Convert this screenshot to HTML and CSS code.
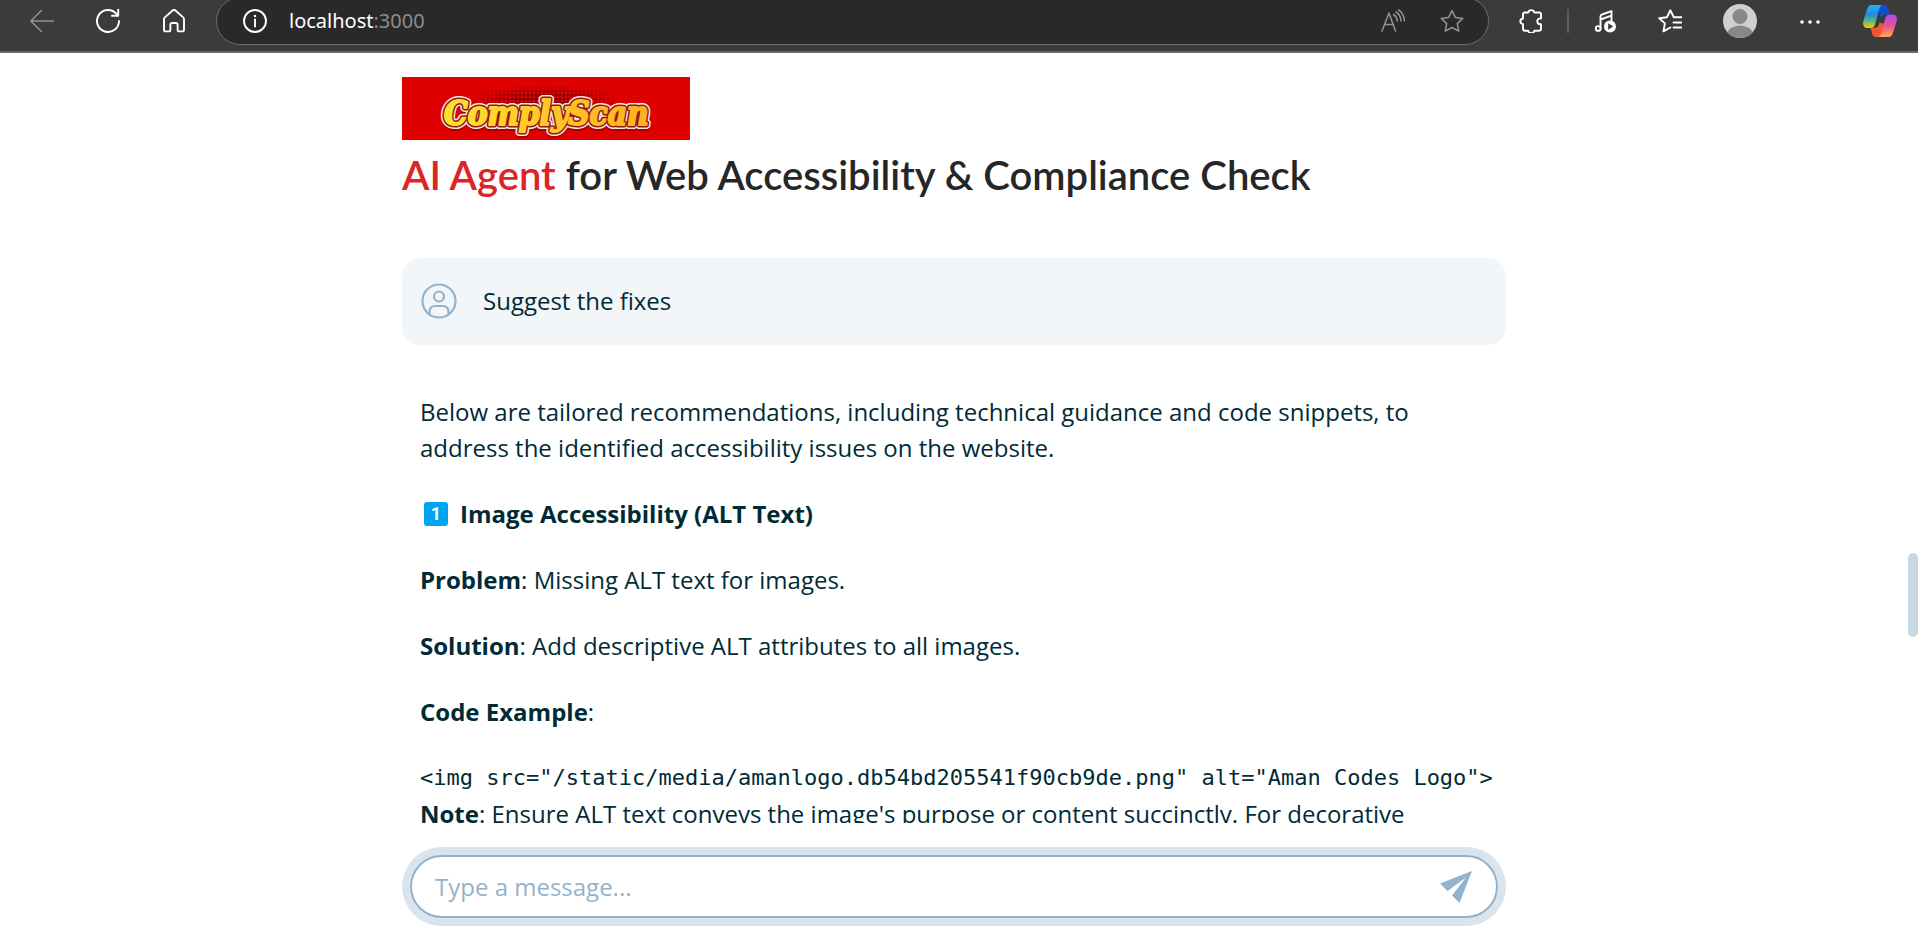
FILE: index.html
```html
<!DOCTYPE html>
<html lang="en">
<head>
<meta charset="utf-8">
<title>ComplyScan</title>
<link rel="stylesheet" href="styles.css">
</head>
<body>
<header class="toolbar">
  <nav class="nav-buttons" aria-label="Browser navigation">
    <button class="tool dim" aria-label="Back"><svg viewBox="0 0 24 24"><path d="M24 12H.8M11.500 1.500L.8 12l10.700 10.500"/></svg></button>
    <button class="tool" aria-label="Refresh"><svg viewBox="0 0 24 24"><path class="bold" d="M23 12A11 11 0 1 1 20.500 5M22.200.5v6.300h-6.300"/></svg></button>
    <button class="tool" aria-label="Home"><svg viewBox="0 0 24 24"><path class="bold" d="M2 10.200c0-.8.300-1.300.8-1.800l7.800-6.900c.9-.8 1.900-.8 2.800 0l7.800 6.900c.5.500.8 1 .8 1.800v10.600c0 1-.6 1.600-1.600 1.600h-3.200c-1 0-1.600-.6-1.600-1.600v-5.200c0-1-.6-1.600-1.600-1.600h-4c-1 0-1.600.6-1.600 1.600v5.200c0 1-.6 1.600-1.600 1.600H3.600c-1 0-1.600-.6-1.600-1.600z"/></svg></button>
  </nav>
  <div class="address">
    <button class="tool" aria-label="Site information"><svg viewBox="0 0 24 24"><circle class="bold" cx="12" cy="12" r="11"/><path class="bold" d="M12 10.500v7"/><circle class="solid" cx="12" cy="7" r="1.200"/></svg></button>
    <div class="url">localhost<span class="port">:3000</span></div>
    <button class="tool dim" aria-label="Read aloud"><svg viewBox="0 0 24 24"><path d="M1 22L8 4l6.500 18M3.700 15.500h8.700M12.500 5.500c2.300 1.500 3.500 3.500 3.700 6.500M15 3c3.200 2 4.800 5 5 9M17.500.8c3.700 2.500 5.700 6.200 6 11.200"/></svg></button>
    <button class="tool dim" aria-label="Add to favorites"><svg viewBox="0 0 24 24"><path d="M12 1.500l3.300 6.900 7.500 1-5.500 5.200 1.400 7.600-6.700-3.700-6.700 3.700 1.400-7.600L1.200 9.400l7.500-1z"/></svg></button>
  </div>
  <div class="tools">
    <button class="tool" aria-label="Extensions"><svg viewBox="0 0 24 24"><path class="bold" d="M6 3.500h3.200a3.200 3.200 0 0 1 6.200 0h4.600c1.300 0 2 .7 2 2v4c-5-1-5 6.600 0 5.600v4.600c0 1.300-.7 2-2 2h-4.600a3.200 3.200 0 0 1-6.200 0H6c-1.300 0-2-.7-2-2v-4.600c-3.600-.8-3.600-4.800 0-5.600v-4c0-1.300.7-2 2-2z"/></svg></button>
    <span class="divider"></span>
    <div class="apps">
      <button class="tool" aria-label="Media"><svg viewBox="0 0 24 24"><path class="bold" d="M7.500 19V7.500c0-1.200.4-1.700 1.500-2l9.500-3.400V12M7.500 10.500l11-3.800"/><circle class="bold" cx="5.200" cy="19.500" r="2.400"/><circle class="solid" cx="17" cy="17.500" r="6"/><path class="cut" d="M15.200 14.200v6.600l5-3.300z"/></svg></button>
      <button class="tool" aria-label="Favorites"><svg viewBox="0 0 24 24"><path class="bold" d="M23.500 8.200h-7.700L12.300 1.300 9 8.200l-7.800 1 5.700 5.200-1.500 8 7-3.900M15.500 13.500h8M15.500 18.500h8"/></svg></button>
      <button class="avatar" aria-label="Profile"><svg viewBox="0 0 34 34"><defs><clipPath id="face"><circle cx="17" cy="17" r="17"/></clipPath></defs><g clip-path="url(#face)"><path fill="#d2d0ce" d="M0 0h34v34H0z"/><circle cx="17" cy="12.500" r="7.500" fill="#8a8886"/><ellipse cx="17" cy="31" rx="13" ry="9.500" fill="#8a8886"/></g></svg></button>
      <button class="tool" aria-label="Settings and more"><svg viewBox="0 0 24 24"><circle class="solid" cx="4" cy="13" r="1.800"/><circle class="solid" cx="12" cy="13" r="1.800"/><circle class="solid" cx="20" cy="13" r="1.800"/></svg></button>
      <button class="avatar" aria-label="Copilot"><svg viewBox="0 0 34 34"><defs>
        <linearGradient id="ca" x1="0" y1="0" x2="0" y2="1"><stop offset="0" stop-color="#1fb5f5"/><stop offset=".4" stop-color="#2088e8"/><stop offset=".7" stop-color="#5cb878"/><stop offset="1" stop-color="#ffd000"/></linearGradient>
        <linearGradient id="cb" x1="0" y1="0" x2="0" y2="1"><stop offset="0" stop-color="#a94df0"/><stop offset=".5" stop-color="#ee5096"/><stop offset="1" stop-color="#ffa84c"/></linearGradient></defs>
        <path fill="#0d4fd0" d="M15 1h6c2.500 0 3.500 1.500 4.200 4l1.500 5.500h-4c-3 0-4 2-5 5z"/>
        <path fill="#f4562f" d="M19 33h-6c-2.500 0-3.300-1.500-4-4l-1.500-5.200h4c3 0 4-2 5-5l5 1z"/>
        <path fill="url(#ca)" d="M8.500 1H20c-2 0-3 1.500-3.700 4l-4.200 15c-.8 2.700-2 4-4.600 4H4.500c-4 0-5.200-3-4-7.500L4 5.500C5 2.500 6 1 8.500 1z"/>
        <path fill="url(#cb)" d="M25.500 33H14.500c2 0 3-1.500 3.700-4l4-14.500c.8-2.700 2-4 4.600-4h2.700c4 0 5.200 3 4 7.500L30 28.500C29 31.500 28 33 25.500 33z"/></svg></button>
    </div>
  </div>
</header>
<div class="page">
  <main class="chat">
    <svg class="logo" viewBox="0 0 288 63" role="img" aria-label="ComplyScan">
      <defs>
        <linearGradient id="gold" x1="0" y1="0" x2="1" y2="0"><stop offset="0" stop-color="#ffe030"/><stop offset="1" stop-color="#ffae22"/></linearGradient>
        <pattern id="dots" width="4" height="4" patternUnits="userSpaceOnUse"><circle cx="2" cy="2" r="1.500" fill="#300"/></pattern>
        <radialGradient id="fade"><stop offset="0" stop-color="#fff"/><stop offset="1" stop-color="#000"/></radialGradient>
        <mask id="glow"><ellipse cx="142" cy="24" rx="78" ry="17" fill="url(#fade)"/></mask>
      </defs>
      <path fill="#df0000" d="M0 0h288v63H0z"/>
      <path fill="url(#dots)" mask="url(#glow)" d="M50 6h180v40H50z"/>
      <g class="wordmark">
        <text class="shade" x="42" y="50">ComplyScan</text>
        <text class="halo" x="42" y="48">ComplyScan</text>
        <text class="edge" x="42" y="48">ComplyScan</text>
        <text class="fill" x="42" y="48">ComplyScan</text>
      </g>
    </svg>
    <h1 class="title"><span class="accent">AI Agent</span> for Web Accessibility &amp; Compliance Check</h1>
    <section class="messages">
      <div class="user-message">
        <svg class="user-icon" viewBox="0 0 36 36"><circle cx="18" cy="18" r="16.500"/><circle cx="18" cy="13.500" r="5"/><path d="M8.500 31v-2c0-4 2.500-6 6-6h7c3.500 0 6 2 6 6v2"/></svg>
        <p>Suggest the fixes</p>
      </div>
      <article class="reply">
        <p>Below are tailored recommendations, including technical guidance and code snippets, to address the identified accessibility issues on the website.</p>
        <p class="step"><span class="keycap">1</span><strong>Image Accessibility (ALT Text)</strong></p>
        <p><strong>Problem</strong>: Missing ALT text for images.</p>
        <p><strong>Solution</strong>: Add descriptive ALT attributes to all images.</p>
        <p><strong>Code Example</strong>:</p>
        <pre><code>&lt;img src="/static/media/amanlogo.db54bd205541f90cb9de.png" alt="Aman Codes Logo"&gt;</code></pre>
        <p><strong>Note</strong>: Ensure ALT text conveys the image's purpose or content succinctly. For decorative</p>
      </article>
    </section>
    <form class="composer">
      <input type="text" aria-label="Message" placeholder="Type a message...">
      <button class="send" type="button" aria-label="Send"><svg viewBox="0 0 32 32"><path d="M32 0L0 12.500l7.500 7.500L26 6.500 12 24.500l7.500 7.500z"/></svg></button>
    </form>
  </main>
  <span class="scroll-thumb"></span>
</div>
</body>
</html>
```
FILE: styles.css
```css
* { box-sizing: border-box; }
body {
  margin: 0;
  height: 100vh;
  display: flex;
  flex-direction: column;
  overflow: hidden;
  background: #fff;
  color: #002b36;
  font: 24px/36px "Open Sans", "Noto Sans", sans-serif;
}
button { padding: 0; border: 0; background: none; color: inherit; display: block; flex: none; }
svg { display: block; }
p, pre, h1 { margin: 0; }

.toolbar {
  flex: none;
  display: flex;
  height: 53px;
  padding: 0 21px 0 30px;
  background: #3b3b3b;
  border-bottom: 2px solid #6c6a6a;
  color: #fff;
}
.nav-buttons, .tools, .apps { display: flex; align-items: center; height: 42px; }
.nav-buttons { gap: 42px; margin-right: 30px; }
.tools { margin-left: 30px; gap: 24px; }
.apps { gap: 41px; }
.tool svg { width: 24px; height: 24px; fill: none; stroke: currentColor; stroke-width: 1.500; stroke-linecap: round; stroke-linejoin: round; }
.tool .bold { stroke-width: 1.900; }
.tool .solid { fill: currentColor; stroke: none; }
.tool .cut { fill: #3b3b3b; stroke: none; }
.dim { color: #949494; }
.divider { width: 2px; height: 24px; background: #5c5c5c; }
.avatar svg { width: 34px; height: 34px; }
.address {
  flex: 1;
  display: flex;
  align-items: center;
  height: 48px;
  margin-top: -3px;
  padding: 0 24px 0 26px;
  border: 1px solid #6c6c6c;
  border-radius: 24px;
  background: #292929;
}
.url { flex: 1; margin-left: 22px; font: 20px/24px "Noto Sans", "Open Sans", sans-serif; }
.port { color: #8d8d8d; }
.address .dim + .dim { margin-left: 35px; }

.page { flex: 1; min-height: 0; position: relative; padding-right: 10px; }
.scroll-thumb { position: absolute; right: 0; top: 500px; width: 10px; height: 84px; border-radius: 5px; background: #c7d8e2; }
.chat {
  display: flex;
  flex-direction: column;
  height: 100%;
  max-width: 1104px;
  margin: 0 auto;
  padding: 24px 0 20px;
}
.logo { flex: none; width: 288px; height: 63px; }
.wordmark { font: italic bold 33px "DejaVu Serif Condensed", "DejaVu Serif", serif; stroke-linejoin: round; }
.shade { fill: #a00; stroke: #a00; stroke-width: 8px; }
.halo { fill: #fbe6e0; stroke: #fbe6e0; stroke-width: 8px; }
.edge { fill: #8e1a0c; stroke: #8e1a0c; stroke-width: 5px; }
.fill { fill: url(#gold); stroke: url(#gold); stroke-width: 2px; }
.title { margin: 11px 0 59px; font: 600 40px/48px Lato, sans-serif; color: #262626; white-space: nowrap; }
.accent { color: #dc2626; }

.messages { flex: 1; min-height: 0; overflow: hidden; }
.user-message {
  display: flex;
  align-items: center;
  gap: 26px;
  padding: 25px 19px 26px;
  border-radius: 18px;
  background: #f3f6f9;
}
.user-icon { width: 36px; height: 36px; fill: none; stroke: #93b3cc; stroke-width: 2.200; }
.reply { display: flex; flex-direction: column; gap: 30px; padding: 49px 18px 0; }
.step { display: flex; align-items: center; }
.keycap { width: 24px; height: 24px; margin: 0 12px 0 4px; border-radius: 3px; background: #00a4ef; color: #fff; font: bold 18px/24px Roboto, sans-serif; text-align: center; }
pre, code { font: 22px/36px "DejaVu Sans Mono", monospace; }
pre + p { margin-top: -30px; }

.composer {
  flex: none;
  display: flex;
  align-items: center;
  gap: 24px;
  height: 63px;
  margin: 32px 8px 7px;
  padding: 0 24px 0 23px;
  border: 2px solid #93b1ca;
  border-radius: 32px;
  box-shadow: 0 0 0 8px #dae4ed;
}
.composer input { flex: 1; min-width: 0; padding: 0; border: 0; outline: 0; background: none; color: inherit; font: inherit; }
.composer input::placeholder { color: #93b3cc; opacity: 1; }
.send svg { width: 32px; height: 32px; fill: #93b3cc; }
```
